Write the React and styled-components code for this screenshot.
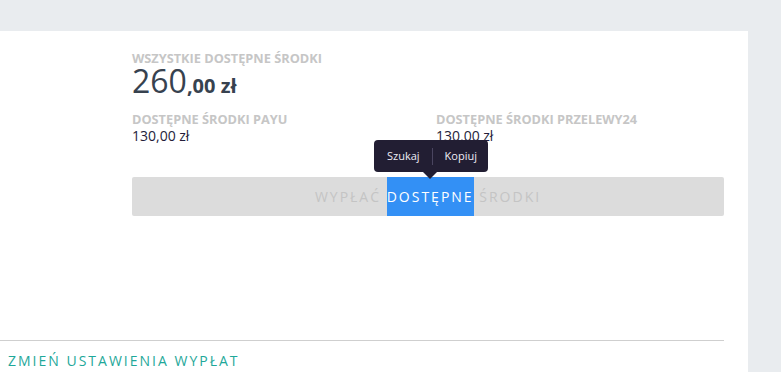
import styled, { createGlobalStyle } from "styled-components";

const Global = createGlobalStyle`
    html, body {
        margin: 0;
        padding: 0;
        background: #e9ecef;
        font-family: "Open Sans", "Liberation Sans", sans-serif;
    }
`

export default function App() {
    return (
        <Page>
            <Global />
            <Card>
                <Summary>
                    <Label>Wszystkie dostępne środki</Label>
                    <Total>260<small>,00 zł</small></Total>
                    <Split>
                        <div>
                            <Label $small>Dostępne środki PayU</Label>
                            <Value>130,00 zł</Value>
                        </div>
                        <div>
                            <Label $small>Dostępne środki Przelewy24</Label>
                            <Value>130,00 zł</Value>
                        </div>
                    </Split>
                    <Payout>
                        Wypłać <Selected>dostępne</Selected> środki
                        <Tooltip>
                            <TipItem>Szukaj</TipItem>
                            <TipDivider />
                            <TipItem>Kopiuj</TipItem>
                        </Tooltip>
                    </Payout>
                </Summary>
                <Footer>
                    <SettingsLink href="#">Zmień ustawienia wypłat</SettingsLink>
                </Footer>
            </Card>
        </Page>
    )
}

const Page = styled.div`
    padding-top: 31px;
    height: 341px;
    overflow: hidden;
`
const Card = styled.div`
    width: 748px;
    height: 360px;
    background: #fff;
    padding-right: 24px;
    box-sizing: border-box;
`
const Summary = styled.div`
    padding: 20px 0 0 132px;
`
const Label = styled.div`
    font-size: 12.75px;
    font-weight: 700;
    line-height: ${p => p.$small ? "14px" : "15px"};
    color: #c6c6c6;
    text-transform: uppercase;
`
const Total = styled.div`
    font-size: 32px;
    line-height: 30px;
    color: #37424f;
    small {
        font-size: 20px;
        font-weight: 700;
    }
`
const Split = styled.div`
    display: grid;
    grid-template-columns: 1fr 1fr;
    column-gap: 16px;
    margin-top: 11px;
`
const Value = styled.div`
    margin-top: 1px;
    font-size: 14px;
    line-height: 18px;
    color: #241d3a;
`
const Payout = styled.div`
    position: relative;
    margin-top: 32px;
    height: 39px;
    line-height: 39px;
    background: #dcdcdc;
    border-radius: 2px;
    text-align: center;
    font-size: 14px;
    letter-spacing: 2px;
    color: #c4c4c4;
    text-transform: uppercase;
`
const Selected = styled.span`
    display: inline-block;
    background: #3390f5;
    color: #fff;
`
const Tooltip = styled.div`
    position: absolute;
    left: 242px;
    top: -37px;
    height: 32px;
    padding: 0 11px 0 13px;
    display: flex;
    align-items: center;
    gap: 12px;
    background: #221e33;
    border-radius: 4px;
    letter-spacing: 0;
    text-transform: none;
    &::after {
        content: "";
        position: absolute;
        left: 49px;
        bottom: -7px;
        border-left: 7px solid transparent;
        border-right: 7px solid transparent;
        border-top: 7px solid #221e33;
    }
`
const TipItem = styled.span`
    font-size: 11px;
    line-height: 16px;
    color: #eeecf4;
`
const TipDivider = styled.span`
    width: 1px;
    height: 17px;
    background: #4a4560;
`
const Footer = styled.div`
    margin-top: 124px;
    border-top: 1px solid #cfcfcf;
    padding: 8px 0 0 8px;
`
const SettingsLink = styled.a`
    font-size: 14px;
    line-height: 18px;
    letter-spacing: 2px;
    color: #1fa89a;
    text-decoration: none;
    text-transform: uppercase;
`
